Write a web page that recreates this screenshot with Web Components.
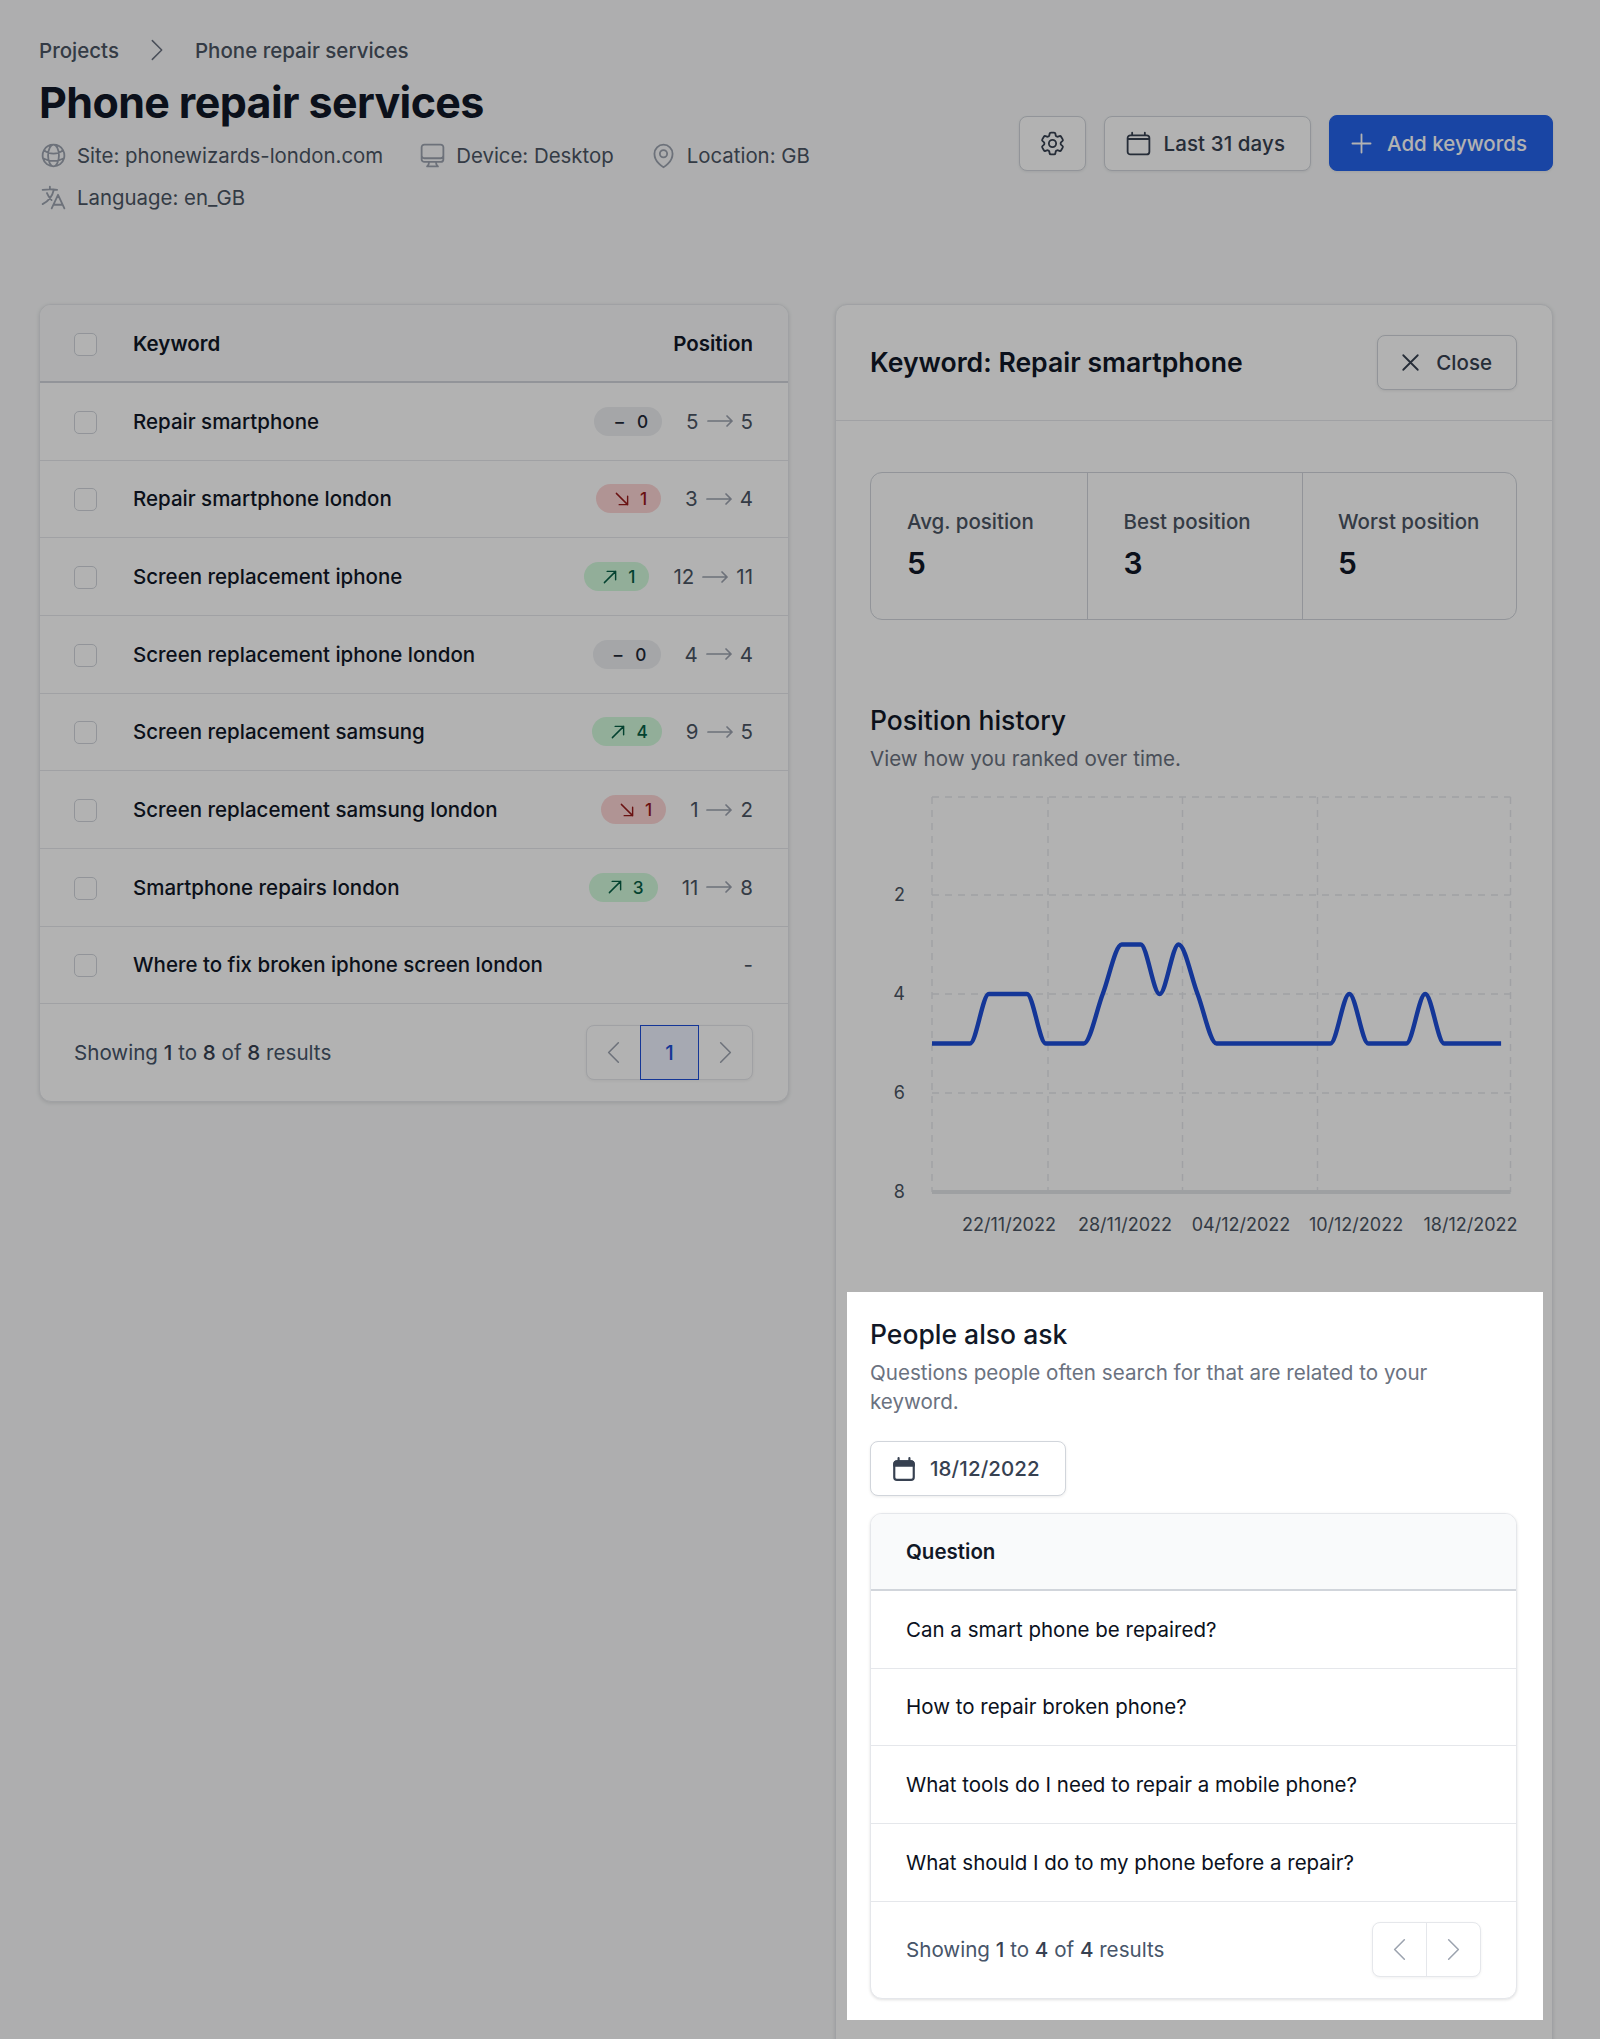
<!DOCTYPE html>
<html lang="en">
<head>
<meta charset="utf-8">
<title>Phone repair services</title>
<style>
  html, body { margin: 0; padding: 0; height: 2039px; overflow: hidden; }
  body { position: relative; background: #f9fafb; font-family: Inter, "Liberation Sans", sans-serif; color: #111827; }
</style>
</head>
<body>
<rank-page>
  <page-header slot="header" title="Phone repair services"></page-header>
  <keyword-table slot="left">
    <keyword-row name="Repair smartphone" kind="same" delta="0" from="5" to="5"></keyword-row>
    <keyword-row name="Repair smartphone london" kind="down" delta="1" from="3" to="4"></keyword-row>
    <keyword-row name="Screen replacement iphone" kind="up" delta="1" from="12" to="11"></keyword-row>
    <keyword-row name="Screen replacement iphone london" kind="same" delta="0" from="4" to="4"></keyword-row>
    <keyword-row name="Screen replacement samsung" kind="up" delta="4" from="9" to="5"></keyword-row>
    <keyword-row name="Screen replacement samsung london" kind="down" delta="1" from="1" to="2"></keyword-row>
    <keyword-row name="Smartphone repairs london" kind="up" delta="3" from="11" to="8"></keyword-row>
    <keyword-row name="Where to fix broken iphone screen london"></keyword-row>
  </keyword-table>
  <detail-panel slot="right">
    <stat-row></stat-row>
    <section-head class="history" title="Position history">View how you ranked over time.</section-head>
    <rank-chart></rank-chart>
    <section-head title="People also ask">Questions people often search for that are related to your keyword.</section-head>
    <date-button></date-button>
    <question-table>
      <question-row>Can a smart phone be repaired?</question-row>
      <question-row>How to repair broken phone?</question-row>
      <question-row>What tools do I need to repair a mobile phone?</question-row>
      <question-row>What should I do to my phone before a repair?</question-row>
    </question-table>
  </detail-panel>
</rank-page>
<spot-light></spot-light>

<script>
const paths = {
  globe: "M12 21a9.004 9.004 0 008.716-6.747M12 21a9.004 9.004 0 01-8.716-6.747M12 21c2.485 0 4.5-4.03 4.5-9S14.485 3 12 3m0 18c-2.485 0-4.5-4.03-4.5-9S9.515 3 12 3m0 0a8.997 8.997 0 017.843 4.582M12 3a8.997 8.997 0 00-7.843 4.582m15.686 0A11.953 11.953 0 0112 10.5c-2.998 0-5.74-1.1-7.843-2.918m15.686 0A8.959 8.959 0 0121 12c0 .778-.099 1.533-.284 2.253m0 0A17.919 17.919 0 0112 16.5c-3.162 0-6.133-.815-8.716-2.247m0 0A9.015 9.015 0 013 12c0-1.605.42-3.113 1.157-4.418",
  desktop: "M9 17.25v1.007a3 3 0 01-.879 2.122L7.5 21h9l-.621-.621A3 3 0 0115 18.257V17.25m6-12V15a2.25 2.25 0 01-2.25 2.25H5.25A2.25 2.25 0 013 15V5.25m18 0A2.25 2.25 0 0018.75 3H5.25A2.25 2.25 0 003 5.25m18 0V12a2.25 2.25 0 01-2.25 2.25H5.25A2.25 2.25 0 013 12V5.25",
  pin: "M15 10.5a3 3 0 11-6 0 3 3 0 016 0z M19.5 10.5c0 7.142-7.5 11.25-7.5 11.25S4.5 17.642 4.5 10.5a7.5 7.5 0 1115 0z",
  language: "M10.5 21l5.25-11.25L21 21m-9-3h7.5M3 5.621a48.474 48.474 0 016-.371m0 0c1.12 0 2.233.038 3.334.114M9 5.25V3m3.334 2.364C11.176 10.658 7.69 15.08 3 17.502m9.334-12.138c.896.061 1.785.147 2.666.257m-4.589 8.495a18.023 18.023 0 01-3.827-5.802",
  cog: "M9.594 3.94c.09-.542.56-.94 1.11-.94h2.593c.55 0 1.02.398 1.11.94l.213 1.281c.063.374.313.686.645.87.074.04.147.083.22.127.324.196.72.257 1.075.124l1.217-.456a1.125 1.125 0 011.37.49l1.296 2.247a1.125 1.125 0 01-.26 1.431l-1.003.827c-.293.24-.438.613-.431.992a6.759 6.759 0 010 .255c-.007.378.138.75.43.99l1.005.828c.424.35.534.954.26 1.43l-1.298 2.247a1.125 1.125 0 01-1.369.491l-1.217-.456c-.355-.133-.75-.072-1.076.124a6.57 6.57 0 01-.22.128c-.331.183-.581.495-.644.869l-.213 1.28c-.09.543-.56.941-1.11.941h-2.594c-.55 0-1.02-.398-1.11-.94l-.213-1.281c-.062-.374-.312-.686-.644-.87a6.52 6.52 0 01-.22-.127c-.325-.196-.72-.257-1.076-.124l-1.217.456a1.125 1.125 0 01-1.369-.49l-1.297-2.247a1.125 1.125 0 01.26-1.431l1.004-.827c.292-.24.437-.613.43-.992a6.932 6.932 0 010-.255c.007-.378-.138-.75-.43-.99l-1.004-.828a1.125 1.125 0 01-.26-1.43l1.297-2.247a1.125 1.125 0 011.37-.491l1.216.456c.356.133.751.072 1.076-.124.072-.044.146-.087.22-.128.332-.183.582-.495.644-.869l.214-1.281z M15 12a3 3 0 11-6 0 3 3 0 016 0z",
  calendar: "M6.75 3v2.25M17.25 3v2.25M3 18.75V7.5a2.25 2.25 0 012.25-2.25h13.5A2.25 2.25 0 0121 7.5v11.25A2.25 2.25 0 0118.75 21H5.25A2.25 2.25 0 013 18.75zM3 8.25h18",
  plus: "M12 4.5v15m7.5-7.5h-15",
  close: "M6 18L18 6M6 6l12 12",
  left: "M15.75 19.5L8.25 12l7.5-7.5",
  right: "M8.25 4.5l7.5 7.5-7.5 7.5",
  up: "M4.5 19.5l15-15m0 0H8.25m11.25 0v11.25",
  down: "M4.5 4.5l15 15m0 0V8.25m0 11.25H8.25",
  long: "M17.25 8.25L21 12m0 0l-3.75 3.75M21 12H3"
};

class UiIcon extends HTMLElement {
  connectedCallback() {
    const size = this.getAttribute("size") || 29;
    const sw = this.getAttribute("stroke") || 1.5;
    this.attachShadow({mode: "open"}).innerHTML = `
      <style>:host{display:inline-flex;flex:none} svg{display:block}</style>
      <svg width="${size}" height="${size}" viewBox="0 0 24 24" fill="none" stroke="currentColor" stroke-width="${sw}" stroke-linecap="round" stroke-linejoin="round"><path d="${paths[this.getAttribute("name")]}"/></svg>`;
  }
}
customElements.define("ui-icon", UiIcon);

class UiButton extends HTMLElement {
  connectedCallback() {
    const icon = this.getAttribute("icon");
    this.attachShadow({mode: "open"}).innerHTML = `
      <style>
        :host{display:inline-flex;align-items:center;gap:11px;height:55px;box-sizing:border-box;padding:0 25px 0 19px;
          border:1px solid #d1d5db;border-radius:8px;background:#fff;color:#374151;font:500 20.5px/29px Inter,sans-serif;
          box-shadow:0 1px 3px rgba(0,0,0,.08)}
        :host([primary]){background:#2563eb;border-color:#2563eb;color:#fff;height:56px;padding-left:17px}
        :host([square]){padding:0;width:67px;justify-content:center}
        :host([spaced]){letter-spacing:.1px}
        :host([tight]){padding:0 24px 0 18px}
      </style>
      <ui-icon name="${icon}"></ui-icon><slot></slot>`;
  }
}
customElements.define("ui-button", UiButton);

class PageHeader extends HTMLElement {
  connectedCallback() {
    const title = this.getAttribute("title");
    this.removeAttribute("title");
    this.attachShadow({mode: "open"}).innerHTML = `
      <style>
        :host{display:flex;justify-content:space-between;align-items:flex-start;padding-top:35px;font-family:Inter,sans-serif}
        .crumbs{display:flex;align-items:center;gap:23px;font:500 20.5px/29px Inter,sans-serif;color:#4b5563}
        .crumbs ui-icon{color:#6b7280}
        h1{margin:11px 0 0;font:700 43px/52px Inter,sans-serif;letter-spacing:-.62px;color:#111827}
        .meta{display:flex;flex-wrap:wrap;width:800px;margin-top:13px;column-gap:35px;row-gap:13px;font:400 20.4px/29px Inter,sans-serif;color:#4b5563}
        .meta span{display:flex;align-items:center;gap:9px}
        .meta ui-icon{color:#9ca3af}
        .actions{display:flex;gap:18px;align-items:center;padding-top:80px}
      </style>
      <div>
        <div class="crumbs"><span>Projects</span><ui-icon name="right" size="30" stroke="1.2"></ui-icon><span>${title}</span></div>
        <h1>${title}</h1>
        <div class="meta">
          <span><ui-icon name="globe"></ui-icon>Site: phonewizards-london.com</span>
          <span><ui-icon name="desktop"></ui-icon>Device: Desktop</span>
          <span><ui-icon name="pin"></ui-icon>Location: GB</span>
          <span><ui-icon name="language"></ui-icon>Language: en_GB</span>
        </div>
      </div>
      <div class="actions">
        <ui-button square icon="cog"></ui-button>
        <ui-button spaced icon="calendar">Last 31 days</ui-button>
        <ui-button primary icon="plus">Add keywords</ui-button>
      </div>`;
  }
}
customElements.define("page-header", PageHeader);

class RankPage extends HTMLElement {
  constructor() {
    super();
    this.attachShadow({mode: "open"}).innerHTML = `
      <style>
        :host{display:block;padding:0 47px 0 39px}
        .cols{display:grid;grid-template-columns:750px 718px;gap:46px;margin-top:92px;align-items:start}
      </style>
      <slot name="header"></slot>
      <div class="cols"><slot name="left"></slot><slot name="right"></slot></div>`;
  }
}
customElements.define("rank-page", RankPage);

class PagerNav extends HTMLElement {
  connectedCallback() {
    const current = this.getAttribute("current");
    this.attachShadow({mode: "open"}).innerHTML = `
      <style>
        :host{display:inline-flex;height:55px;box-sizing:border-box;border:1px solid #e5e7eb;border-radius:8px;background:#fff;
          box-shadow:0 1px 3px rgba(0,0,0,.06);font:500 20.5px/29px Inter,sans-serif}
        div{display:flex;align-items:center;justify-content:center;width:53px;color:#9ca3af}
        .cur{width:59px;margin:-1px 0;border:1px solid #1d4ed8;box-sizing:border-box;background:#eef2ff;color:#1d4ed8}
        .sep{border-left:1px solid #e5e7eb}
      </style>
      <div><ui-icon name="left" size="31" stroke="1.2"></ui-icon></div>
      ${current ? `<div class="cur">${current}</div>` : ""}
      <div class="${current ? "" : "sep"}"><ui-icon name="right" size="31" stroke="1.2"></ui-icon></div>`;
  }
}
customElements.define("pager-nav", PagerNav);

class ResultFooter extends HTMLElement {
  connectedCallback() {
    const n = this.getAttribute("count");
    const current = this.getAttribute("current");
    this.attachShadow({mode: "open"}).innerHTML = `
      <style>
        :host{display:flex;justify-content:space-between;align-items:center;box-sizing:border-box;height:97px;font:400 20.6px/29px Inter,sans-serif;color:#475569}
        b{font-weight:500;color:#374151}
      </style>
      <span>Showing <b>1</b> to <b>${n}</b> of <b>${n}</b> results</span>
      <pager-nav ${current ? `current="${current}"` : ""}></pager-nav>`;
  }
}
customElements.define("result-footer", ResultFooter);

class KeywordTable extends HTMLElement {
  constructor() {
    super();
    this.attachShadow({mode: "open"}).innerHTML = `
      <style>
        :host{display:block;background:#fff;border:1px solid #e5e7eb;border-radius:12px;box-shadow:0 1px 4px rgba(0,0,0,.12);overflow:hidden}
        .head{display:flex;align-items:center;height:78px;box-sizing:border-box;padding:1px 35px 0 34px;background:#f9fafb;border-bottom:2px solid #d1d5db;font:600 20.5px/29px Inter,sans-serif;color:#111827}
        .box{width:23px;height:23px;box-sizing:border-box;border:1px solid #d1d5db;border-radius:5px;background:#fff;margin:2px 36px 0 0}
        .pos{margin-left:auto}
        result-footer{padding:0 35px 0 34px}
      </style>
      <div class="head"><span class="box"></span><span>Keyword</span><span class="pos">Position</span></div>
      <slot></slot>
      <result-footer count="8" current="1"></result-footer>`;
  }
}
customElements.define("keyword-table", KeywordTable);

class TrendBadge extends HTMLElement {
  connectedCallback() {
    const kind = this.getAttribute("kind");
    const mark = kind === "same" ? `<span class="dash">–</span>` : `<ui-icon name="${kind}" size="18" stroke="1.9"></ui-icon>`;
    this.attachShadow({mode: "open"}).innerHTML = `
      <style>
        :host{display:inline-flex;align-items:center;height:29px;padding:0 14px 0 17px;border-radius:15px;font:500 17.25px/29px Inter,sans-serif;gap:9px}
        :host([kind=same]){background:#eceef1;color:#1f2937;gap:13px;padding-left:21px}
        :host([kind=up]){background:#d1fadb;color:#065f46}
        :host([kind=down]){background:#fdd5d5;color:#991b1b}
        .dash{font-weight:600}
      </style>
      ${mark}<slot></slot>`;
  }
}
customElements.define("trend-badge", TrendBadge);

class KeywordRow extends HTMLElement {
  connectedCallback() {
    const a = n => this.getAttribute(n);
    const pos = a("kind")
      ? `<trend-badge kind="${a("kind")}">${a("delta")}</trend-badge><span class="pos">${a("from")}<ui-icon name="long" size="32" stroke="1.3"></ui-icon>${a("to")}</span>`
      : `<span class="pos">-</span>`;
    this.attachShadow({mode: "open"}).innerHTML = `
      <style>
        :host{display:flex;align-items:center;height:77.67px;box-sizing:border-box;padding:0 35px 0 34px;border-bottom:1px solid #e5e7eb;font:500 20.5px/29px Inter,sans-serif;color:#111827}
        .box{width:23px;height:23px;box-sizing:border-box;border:1px solid #d1d5db;border-radius:5px;background:#fff;margin:2px 36px 0 0}
        .end{margin-left:auto;display:flex;align-items:center;gap:24px}
        .pos{display:flex;align-items:center;color:#4b5563;font-weight:400}
        ui-icon{color:#9ca3af}
        .pos ui-icon{margin:0 5px}
      </style>
      <span class="box"></span><span>${a("name")}</span><span class="end">${pos}</span>`;
  }
}
customElements.define("keyword-row", KeywordRow);

class DetailPanel extends HTMLElement {
  constructor() {
    super();
    this.attachShadow({mode: "open"}).innerHTML = `
      <style>
        :host{display:block;background:#fff;border:1px solid #e5e7eb;border-radius:12px 12px 0 0;box-shadow:0 1px 4px rgba(0,0,0,.12);height:1800px}
        .head{display:flex;justify-content:space-between;align-items:center;height:116px;box-sizing:border-box;padding:0 35px 0 34px;border-bottom:1px solid #e5e7eb}
        h2{margin:0;font:600 26.6px/37px Inter,sans-serif;color:#111827}
        .body{padding:51px 35px 0 34px}
      </style>
      <div class="head"><h2>Keyword: Repair smartphone</h2><ui-button tight icon="close">Close</ui-button></div>
      <div class="body"><slot></slot></div>`;
  }
}
customElements.define("detail-panel", DetailPanel);

class StatRow extends HTMLElement {
  connectedCallback() {
    const stats = [["Avg. position", 5], ["Best position", 3], ["Worst position", 5]];
    this.attachShadow({mode: "open"}).innerHTML = `
      <style>
        :host{display:grid;grid-template-columns:216px 214.5px 1fr;box-sizing:border-box;height:148px;border:1px solid #d1d5db;border-radius:12px}
        div{padding:34px 0 0 36px}
        div + div{border-left:1px solid #d1d5db;padding-left:35.5px}
        p{margin:0;font:500 20.5px/29px Inter,sans-serif;color:#4b5563}
        strong{display:block;margin-top:7px;font:600 30px/41px Inter,sans-serif;color:#111827}
      </style>
      ${stats.map(s => `<div><p>${s[0]}</p><strong>${s[1]}</strong></div>`).join("")}`;
  }
}
customElements.define("stat-row", StatRow);

class SectionHead extends HTMLElement {
  connectedCallback() {
    const title = this.getAttribute("title");
    this.removeAttribute("title");
    this.attachShadow({mode: "open"}).innerHTML = `
      <style>
        :host{display:block}
        :host(.history){margin-top:82px}
        h3{margin:0 0 5px;font:500 26.5px/37px Inter,sans-serif;color:#111827}
        p{margin:0;max-width:620px;font:400 20.6px/29px Inter,sans-serif;color:#6b7280}
      </style>
      <h3>${title}</h3><p><slot></slot></p>`;
  }
}
customElements.define("section-head", SectionHead);

// monotone-x curve, same shape the chart lib draws
function monotonePath(pts) {
  const n = pts.length, dx = [], sl = [], m = [];
  for (let i = 0; i < n - 1; i++) {
    dx[i] = pts[i + 1][0] - pts[i][0];
    sl[i] = (pts[i + 1][1] - pts[i][1]) / dx[i];
  }
  m[0] = sl[0];
  m[n - 1] = sl[n - 2];
  for (let i = 1; i < n - 1; i++) {
    m[i] = sl[i - 1] * sl[i] <= 0 ? 0 : 2 * sl[i - 1] * sl[i] / (sl[i - 1] + sl[i]);
  }
  let d = `M${pts[0][0]},${pts[0][1]}`;
  for (let i = 0; i < n - 1; i++) {
    const h = dx[i] / 3;
    d += `C${pts[i][0] + h},${pts[i][1] + m[i] * h} ${pts[i + 1][0] - h},${pts[i + 1][1] - m[i + 1] * h} ${pts[i + 1][0]},${pts[i + 1][1]}`;
  }
  return d;
}

class RankChart extends HTMLElement {
  connectedCallback() {
    const left = 62, right = 640.5, top = 24, bottom = 419;
    const y = v => 23 + 49.5 * v;
    const data = [5,5,5,4,4,4,5,5,5,4,3,3,4,3,4,5,5,5,5,5,5,5,4,5,5,5,4,5,5,5,5];
    const line = monotonePath(data.map((v, i) => [left + i * 18.97, y(v)]));
    const vx = [62, 178, 312.5, 447.5, 640.5];
    const labels = [["22/11/2022", 139], ["28/11/2022", 255], ["04/12/2022", 371], ["10/12/2022", 486], ["18/12/2022", 600.5]];
    this.attachShadow({mode: "open"}).innerHTML = `
      <style>
        :host{display:block;margin-bottom:75px}
        svg{display:block;font:400 18px Inter,sans-serif}
        text{fill:#4b5563}
      </style>
      <svg width="648" height="468" viewBox="0 0 648 468">
        <g stroke="#e5e7eb" stroke-width="1.4" stroke-dasharray="7 6" fill="none">
          ${vx.map(x => `<line x1="${x}" x2="${x}" y1="${top}" y2="${bottom}"/>`).join("")}
          ${[top, y(2), y(4), y(6)].map(v => `<line x1="${left}" x2="${right}" y1="${v}" y2="${v}"/>`).join("")}
        </g>
        <line x1="${left}" x2="${right}" y1="${bottom}" y2="${bottom}" stroke="#e2e5e9" stroke-width="4"/>
        <path d="${line}" fill="none" stroke="#1d4ed8" stroke-width="4.4"/>
        ${[2, 4, 6, 8].map(v => `<text x="35" y="${y(v) + 6}" text-anchor="end">${v}</text>`).join("")}
        ${labels.map(l => `<text x="${l[1]}" y="458" text-anchor="middle">${l[0]}</text>`).join("")}
      </svg>`;
  }
}
customElements.define("rank-chart", RankChart);

class DateButton extends HTMLElement {
  constructor() {
    super();
    this.attachShadow({mode: "open"}).innerHTML = `
      <style>
        :host{display:inline-flex;align-items:center;gap:13px;height:55px;box-sizing:border-box;margin:25px 0 17px;padding:0 25px 0 20px;
          border:1px solid #d1d5db;border-radius:8px;background:#fff;box-shadow:0 1px 3px rgba(0,0,0,.08);font:500 20.5px/29px Inter,sans-serif;letter-spacing:.1px;color:#374151;vertical-align:top}
        svg{display:block}
      </style>
      <svg width="26" height="26" viewBox="0 0 24 24" fill="none" stroke="#374151" stroke-width="2" stroke-linejoin="round"><path d="M7 2v3M17 2v3" stroke-linecap="round"/><rect x="3" y="5" width="18" height="17" rx="2.5"/><path d="M3 7.5a2.5 2.5 0 012.5-2.5h13A2.5 2.5 0 0121 7.5V9H3z" fill="#374151"/></svg>
      <span>18/12/2022</span>`;
  }
}
customElements.define("date-button", DateButton);

class QuestionTable extends HTMLElement {
  constructor() {
    super();
    this.attachShadow({mode: "open"}).innerHTML = `
      <style>
        :host{display:block;background:#fff;border:1px solid #e5e7eb;border-radius:12px;box-shadow:0 1px 3px rgba(0,0,0,.12);overflow:hidden}
        .head{display:flex;align-items:center;height:77px;box-sizing:border-box;padding:0 35px;background:#f9fafb;border-bottom:2px solid #d1d5db;font:600 20.5px/29px Inter,sans-serif;color:#111827}
        result-footer{padding:0 35px;height:96px}
      </style>
      <div class="head">Question</div>
      <slot></slot>
      <result-footer count="4"></result-footer>`;
  }
}
customElements.define("question-table", QuestionTable);

class QuestionRow extends HTMLElement {
  constructor() {
    super();
    this.attachShadow({mode: "open"}).innerHTML = `
      <style>
        :host{display:flex;align-items:center;height:77.67px;box-sizing:border-box;padding:0 35px;border-bottom:1px solid #e5e7eb;font:400 20.5px/29px Inter,sans-serif;color:#0b1120}
      </style>
      <slot></slot>`;
  }
}
customElements.define("question-row", QuestionRow);

class SpotLight extends HTMLElement {
  constructor() {
    super();
    this.attachShadow({mode: "open"}).innerHTML = `
      <style>
        :host{position:absolute;left:847px;top:1292px;width:695.5px;height:728px;box-shadow:0 0 0 3000px rgba(0,0,0,.3);pointer-events:none}
      </style>`;
  }
}
customElements.define("spot-light", SpotLight);
</script>
</body>
</html>
